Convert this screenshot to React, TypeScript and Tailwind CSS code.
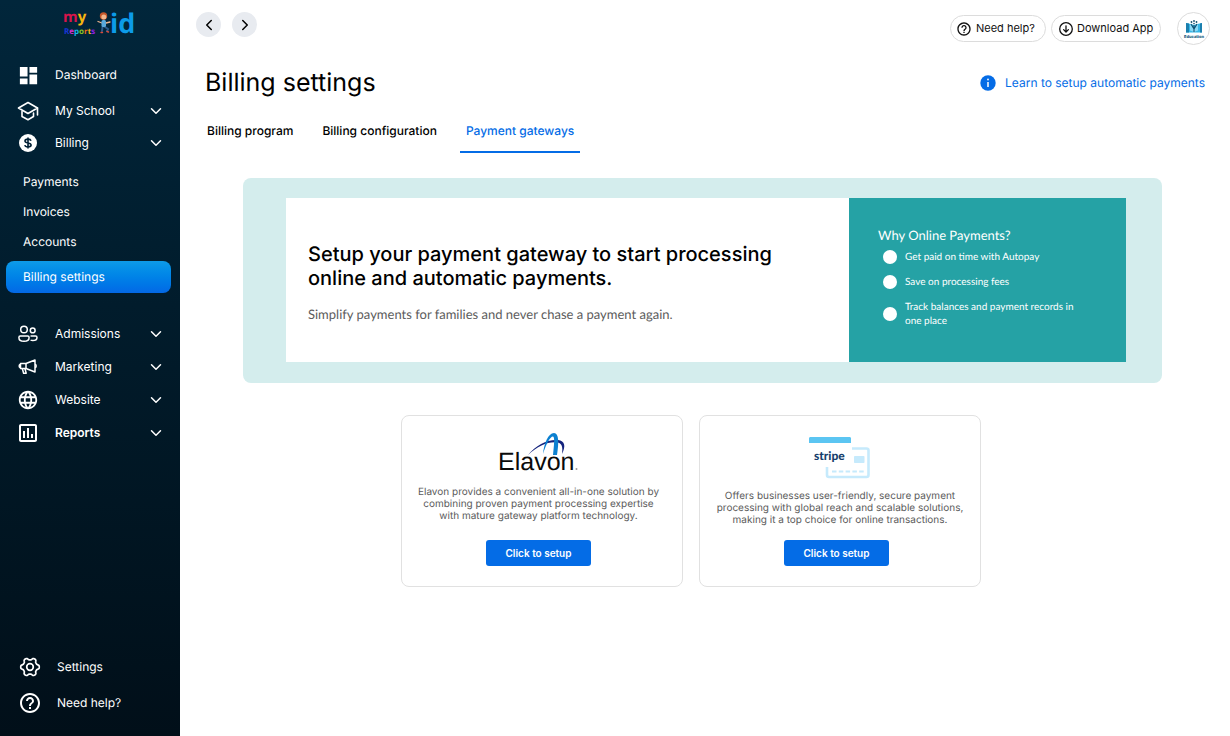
import type { ReactNode } from "react";
import { ChevronDown, ChevronLeft, ChevronRight } from "lucide-react";
import { MdDashboard, MdLanguage, MdOutlineAssessment, MdHelpOutline } from "react-icons/md";

function Logo() {
  return (
    <svg width="80" height="40" viewBox="0 -4 80 40" role="img" aria-label="my Reports kid" fontFamily="'Open Sans', sans-serif">
      <text x="2" y="15" fontSize="15" fontWeight="700">
        <tspan fill="#d9144a">m</tspan>
        <tspan fill="#f5b50f">y</tspan>
      </text>
      <text x="3" y="27" fontSize="8" fontWeight="700">
        <tspan fill="#1836d8">R</tspan>
        <tspan fill="#d62fd0">e</tspan>
        <tspan fill="#1ab8e8">p</tspan>
        <tspan fill="#8bc220">o</tspan>
        <tspan fill="#f06a14">r</tspan>
        <tspan fill="#f5b50f">t</tspan>
        <tspan fill="#8a1fe0">s</tspan>
      </text>
      <g fill="none" strokeLinecap="round">
        <path d="M37 14.500l4 1.500M45 16l4-1" stroke="#f0b58e" strokeWidth="1.300" />
        <path d="M41.500 20l-.5 4M44 20l3 2-1 2" stroke="#2d5b8c" strokeWidth="2" />
        <path d="M40 25.500h1.500M46 24.500l1.500.5" stroke="#d84a3c" strokeWidth="1.400" />
      </g>
      <rect x="40.500" y="13" width="4.500" height="7" rx="1.500" fill="#5aa9dc" />
      <circle cx="42.500" cy="9" r="3.700" fill="#c4562a" />
      <circle cx="42.800" cy="10" r="2.500" fill="#f2b68c" />
      <text x="49" y="26" fontSize="27" fontWeight="700" fill="#0c9be8">id</text>
    </svg>
  );
}

function SchoolIcon() {
  return (
    <svg width="22" height="20" viewBox="0 0 22 20" fill="none" stroke="#fff" strokeWidth="1.600" strokeLinejoin="round" strokeLinecap="round" aria-hidden="true">
      <path d="M11 1.500L1.500 7l9.500 5.500L20.500 7z" />
      <path d="M5 10.500v5l6 3.200 5.500-3.200v-3.500M20.500 7v7" />
    </svg>
  );
}

function DollarIcon() {
  return (
    <svg width="18" height="18" viewBox="0 0 18 18" fill="none" aria-hidden="true">
      <circle cx="9" cy="9" r="9" fill="#fff" />
      <path d="M9 3.500v11M12 6.700c-.3-1-1.300-1.600-3-1.600-1.900 0-3 .7-3 1.900 0 2.700 6.100 1.200 6.100 4 0 1.200-1.200 1.900-3.100 1.900-1.800 0-2.900-.6-3.200-1.800" stroke="#012035" strokeWidth="1.600" />
    </svg>
  );
}

function PeopleIcon() {
  return (
    <svg width="20" height="18" viewBox="0 0 20 18" fill="none" stroke="#fff" strokeWidth="1.500" aria-hidden="true">
      <circle cx="6" cy="4.500" r="3.300" />
      <circle cx="14.700" cy="5.400" r="2.400" />
      <path d="M2.300 11h7.400c.8 0 1.400.6 1.400 1.400 0 2.300-2 3.900-5.100 3.900S.9 14.700.9 12.400c0-.8.600-1.400 1.400-1.400z" />
      <path d="M12.500 11h5.100c.8 0 1.400.6 1.400 1.400 0 2-1.600 3.100-4.200 3.100-.8 0-1.600-.1-2.200-.4" />
    </svg>
  );
}

function MegaphoneIcon() {
  return (
    <svg width="20" height="16" viewBox="0 0 20 16" fill="none" stroke="#fff" strokeWidth="1.500" strokeLinejoin="round" aria-hidden="true">
      <path d="M2.500 4.500h5.500L17 1v12l-9-3.500H2.500z" />
      <path d="M8 4.500v5M17 5.500c1.600 0 1.600 3 0 3M2.500 5.500c-1.800 0-1.800 3 0 3M4.300 9.500l1.300 4.800h2.600L7 9.800" />
    </svg>
  );
}

const gearPoints = Array.from({ length: 120 }, (_, i) => {
  const a = (i / 120) * Math.PI * 2;
  const r = 8.2 + 1.1 * Math.tanh(2 * Math.cos(6 * a));
  return `${(11 + r * Math.cos(a)).toFixed(2)},${(11 + r * Math.sin(a)).toFixed(2)}`;
}).join(" ");

function GearIcon() {
  return (
    <svg width="22" height="22" viewBox="0 0 22 22" fill="none" stroke="#fff" strokeWidth="1.700" strokeLinejoin="round" aria-hidden="true">
      <polygon points={gearPoints} />
      <circle cx="11" cy="11" r="3.300" />
    </svg>
  );
}

function NavRow({ icon, label, caret, bold, className }: { icon: ReactNode; label: string; caret?: boolean; bold?: boolean; className?: string }) {
  const inner = (
    <>
      <span className="flex w-6 shrink-0 justify-center">{icon}</span>
      <span className={bold ? "ml-[15px] flex-1 text-left font-semibold" : "ml-[15px] flex-1 text-left"}>{label}</span>
      {caret && <ChevronDown size={18} strokeWidth={2} />}
    </>
  );
  const cls = `flex w-full items-center pl-4 pr-[15px] ${className ?? "h-[33px]"}`;
  return caret ? (
    <button type="button" className={cls}>{inner}</button>
  ) : (
    <a href="#" className={cls}>{inner}</a>
  );
}

function Sidebar() {
  return (
    <aside className="flex w-[180px] shrink-0 flex-col bg-linear-to-b from-[#01263b] via-[#011a29] to-[#010f19] text-xs text-white">
      <a href="#" className="ml-[61px] mt-[3px] block w-20">
        <Logo />
      </a>
      <nav className="mt-4 flex flex-col">
        <NavRow className="h-8" icon={<MdDashboard size={23} />} label="Dashboard" />
        <NavRow className="mt-1 h-8" icon={<SchoolIcon />} label="My School" caret />
        <NavRow className="h-8" icon={<DollarIcon />} label="Billing" caret />
        <div className="mt-2 flex flex-col px-[6px]">
          {["Payments", "Invoices", "Accounts"].map((t) => (
            <a key={t} href="#" className="flex h-[30px] items-center pl-[17px]">{t}</a>
          ))}
          <a href="#" aria-current="page" className="mr-[3px] mt-1 flex h-8 items-center rounded-lg bg-linear-to-b from-[#0e9be8] to-[#0468e6] pl-[17px]">
            Billing settings
          </a>
        </div>
        <div className="mt-6 flex flex-col">
          <NavRow icon={<PeopleIcon />} label="Admissions" caret />
          <NavRow icon={<MegaphoneIcon />} label="Marketing" caret />
          <NavRow icon={<MdLanguage size={22} />} label="Website" caret />
          <NavRow icon={<MdOutlineAssessment size={24} />} label="Reports" caret bold />
        </div>
      </nav>
      <div className="mt-auto flex flex-col pb-[15px] pl-[2px]">
        <NavRow className="h-9" icon={<GearIcon />} label="Settings" />
        <NavRow className="h-9" icon={<MdHelpOutline size={24} />} label="Need help?" />
      </div>
    </aside>
  );
}

function DownloadIcon() {
  return (
    <svg width="14" height="14" viewBox="0 0 14 14" fill="none" stroke="currentColor" strokeWidth="1.300" strokeLinecap="round" strokeLinejoin="round" aria-hidden="true">
      <circle cx="7" cy="7" r="6.300" />
      <path d="M7 3.800v6M4.600 7.600L7 10l2.400-2.400" />
    </svg>
  );
}

function EducationLogo() {
  return (
    <svg width="24" height="20" viewBox="0 0 24 20" role="img" aria-label="Education">
      <path d="M4 4l7 1.500 1 1 1-1L20 4v9.500H4z" fill="#35b6e6" />
      <path d="M4 4v9.500h3V4.600zM20 4v9.500h-2V4.400z" fill="#1b7fae" />
      <path d="M8 4.500l4 6 4-6v7l-4 1.500-4-1.500z" fill="#8bd9f5" />
      <path d="M12 13V6M12 10L9 5M12 10l3-5" stroke="#14506f" strokeWidth="1.100" fill="none" />
      <g fill="#14506f">
        <circle cx="12" cy="2" r=".9" />
        <circle cx="9.500" cy="3" r=".9" />
        <circle cx="14.500" cy="3" r=".9" />
        <circle cx="12" cy="4.600" r=".8" />
      </g>
      <text x="12" y="18.500" fontSize="4" fontWeight="800" textAnchor="middle" fill="#14567c" fontFamily="Inter, sans-serif">Education</text>
    </svg>
  );
}

function TopBar() {
  return (
    <header className="flex items-start justify-between pl-4 pr-5 pt-3">
      <div className="flex gap-[11px]">
        <button type="button" aria-label="Back" className="flex size-[25px] items-center justify-center rounded-full bg-[#e8ebf0]">
          <ChevronLeft size={18} />
        </button>
        <button type="button" aria-label="Forward" className="flex size-[25px] items-center justify-center rounded-full bg-[#e8ebf0]">
          <ChevronRight size={18} />
        </button>
      </div>
      <div className="flex items-center text-[11px] text-[#111]">
        <button type="button" className="flex h-[27px] w-24 items-center gap-1 rounded-full border border-[#dcdcdc] pl-[5px]">
          <MdHelpOutline size={16} />
          Need help?
        </button>
        <button type="button" className="ml-[5px] flex h-[27px] w-[110px] items-center gap-1 rounded-full border border-[#dcdcdc] pl-[7px]">
          <DownloadIcon />
          Download App
        </button>
        <a href="#" className="ml-4 flex size-[33px] items-center justify-center rounded-full border border-[#dcdcdc]">
          <EducationLogo />
        </a>
      </div>
    </header>
  );
}

function ElavonLogo() {
  return (
    <svg width="82" height="44" viewBox="0 0 82 44" role="img" aria-label="Elavon">
      <path d="M30 23C38 13 50 7 60 8c7 1 8 6 4 14 1-7 0-11-5-11.500C50 9.500 40 14 30 23z" fill="#14237d" />
      <path d="M45 22C46 12 50 1 56 1c5 0 5 10 3 22h-4c1-9 2-18.500 0-18.500-3 0-7 8-10 17.500z" fill="#0c80d0" />
      <text x="0" y="38" fontSize="25" fill="#0a0a0a" fontFamily="'Liberation Sans', Arial, sans-serif">Elavon</text>
      <circle cx="78.500" cy="37" r="1" fill="#999" />
    </svg>
  );
}

function StripeLogo() {
  return (
    <svg width="62" height="46" viewBox="0 0 62 46" role="img" aria-label="stripe">
      <path d="M0 9V4.500C0 3.500.7 3 1.500 3h39c.8 0 1.500.5 1.500 1.500V9z" fill="#5bc5f2" />
      <path d="M43 14.500h14.500c1.200 0 2 .8 2 2V41c0 1.200-.8 2-2 2H20c-1.200 0-2-.8-2-2v-8" fill="none" stroke="#c6eafc" strokeWidth="2.600" />
      <rect x="45" y="22" width="10.500" height="7" rx=".8" fill="#c6eafc" />
      <path d="M23 37.500h32" stroke="#c6eafc" strokeWidth="2" strokeDasharray="4.500 2.300" />
      <text x="5" y="26" fontSize="12" fontWeight="900" fill="#173f6c" fontFamily="Lato, sans-serif">stripe</text>
    </svg>
  );
}

function GatewayCard({ logo, lines, className, buttonClassName }: { logo: ReactNode; lines: string[]; className: string; buttonClassName?: string }) {
  return (
    <section className={`flex h-[172px] w-[282px] flex-col items-center rounded-lg border border-[#e1e1e1] pb-5 ${className}`}>
      {logo}
      <p className="mt-[10px] text-center text-[10px] leading-3 text-[#5b5b5b]">
        {lines.map((l) => (
          <span key={l} className="block whitespace-nowrap">{l}</span>
        ))}
      </p>
      <button type="button" className={`mt-auto h-[26px] w-[105px] rounded-[3px] bg-[#046ce6] text-[10px] font-semibold text-white ${buttonClassName ?? ""}`}>
        Click to setup
      </button>
    </section>
  );
}

function Banner() {
  return (
    <section className="ml-[63px] mr-[68px] mt-[25px] flex rounded-lg bg-[#d4eded] pb-[21px] pl-[43px] pr-9 pt-5">
      <div className="flex h-[164px] flex-1 flex-col bg-white pl-[22px] pt-11">
        <h2 className="text-[20px] font-medium leading-6 text-black">
          Setup your payment gateway to start processing
          <br />
          online and automatic payments.
        </h2>
        <p className="mt-[14px] font-[Lato,sans-serif] text-[13px] leading-5 text-[#5c5c5c]">
          Simplify payments for families and never chase a payment again.
        </p>
      </div>
      <div className="w-[277px] bg-[#25a2a5] pl-[29px] pt-7 font-[Lato,sans-serif] text-white">
        <h3 className="text-[13px] leading-[18px]">Why Online Payments?</h3>
        <ul className="ml-[5px] mt-[6px] flex flex-col gap-[11px] text-[10px] leading-[14px]">
          {["Get paid on time with Autopay", "Save on processing fees", "Track balances and payment records in one place"].map((t) => (
            <li key={t} className="flex items-center gap-2">
              <span className="size-[14px] shrink-0 rounded-full bg-white" />
              <span className="w-[185px]">{t}</span>
            </li>
          ))}
        </ul>
      </div>
    </section>
  );
}

export default function App() {
  return (
    <div className="flex min-h-screen bg-white font-[Inter,sans-serif] text-black [text-rendering:geometricPrecision]">
      <Sidebar />
      <main className="flex min-w-0 flex-1 flex-col">
        <TopBar />
        <div className="mt-5 flex items-center justify-between pl-[25px] pr-[25px]">
          <h1 className="text-[25px] leading-9">Billing settings</h1>
          <a href="#" className="flex items-center gap-[9px] text-xs text-[#046ce6]">
            <svg width="16" height="16" viewBox="0 0 16 16" aria-hidden="true">
              <circle cx="8" cy="8" r="7.700" fill="#046ce6" />
              <path d="M8 7v5" stroke="#fff" strokeWidth="1.500" />
              <circle cx="8" cy="4.500" r=".9" fill="#fff" />
            </svg>
            Learn to setup automatic payments
          </a>
        </div>
        <nav className="ml-[21px] mt-2 flex gap-[17px] text-xs font-medium">
          <a href="#" className="flex h-11 items-center px-[6px]">Billing program</a>
          <a href="#" className="flex h-11 items-center px-[6px]">Billing configuration</a>
          <a href="#" aria-current="page" className="flex h-11 items-center border-b-2 border-t-2 border-b-[#046ce6] border-t-transparent px-[6px] text-[#046ce6]">Payment gateways</a>
        </nav>
        <Banner />
        <div className="mt-8 flex justify-center gap-4 pr-7">
          <GatewayCard
            className="pr-[7px] pt-4"
            logo={<ElavonLogo />}
            lines={["Elavon provides a convenient all-in-one solution by", "combining proven payment processing expertise", "with mature gateway platform technology."]}
          />
          <GatewayCard
            className="pt-[18px]"
            buttonClassName="mr-[7px]"
            logo={<StripeLogo />}
            lines={["Offers businesses user-friendly, secure payment", "processing with global reach and scalable solutions,", "making it a top choice for online transactions."]}
          />
        </div>
      </main>
    </div>
  );
}
